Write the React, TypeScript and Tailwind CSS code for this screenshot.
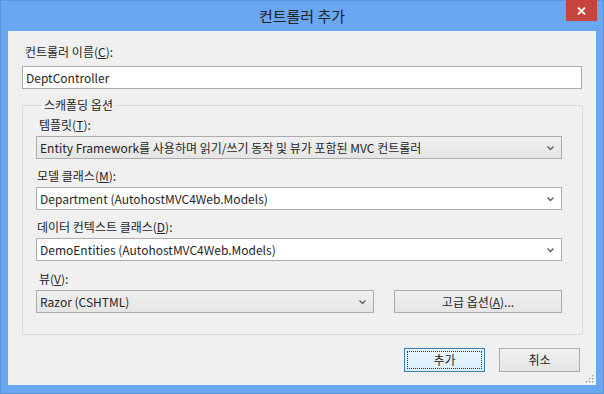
import React from 'react';

const Chevron = () => (
  <svg width="9" height="6" viewBox="0 0 9 6" className="shrink-0">
    <path d="M1.5 1.5 L4.5 4.5 L7.5 1.5" fill="none" stroke="#5f5f5f" strokeWidth="1.4" />
  </svg>
);

interface SelectProps {
  value: string;
  gray?: boolean;
  className?: string;
}

const Select: React.FC<SelectProps> = ({ value, gray, className }) => (
  <div
    className={`flex h-[23px] items-center border pl-[3px] pr-[6px] ${
      gray ? 'border-[#acacac] bg-linear-to-b from-[#f0f0f0] to-[#e5e5e5]' : 'border-[#abadb3] bg-white'
    } ${className ?? ''}`}
  >
    <span className="flex-1 truncate">{value}</span>
    <Chevron />
  </div>
);

const Label: React.FC<{ children: React.ReactNode; className?: string }> = ({ children, className }) => (
  <div className={`h-[16px] leading-[16px] ${className ?? ''}`}>{children}</div>
);

export default function App() {
  return (
    <div className="flex h-[394px] w-[604px] flex-col border border-[#5b96dc] bg-[#69a8f0] font-['Noto_Sans_CJK_KR',sans-serif] text-[12px] text-[#262626]">
      {/* title bar */}
      <div className="relative flex h-[30px] items-center justify-center text-[15px] text-[#222]">
        컨트롤러 추가
        <div className="absolute -top-px right-[6px] flex h-[21px] w-[31px] items-center justify-center bg-[#c7433d]">
          <svg width="9" height="8" viewBox="0 0 9 8">
            <path d="M1 0.5 L8 7.5 M8 0.5 L1 7.5" stroke="white" strokeWidth="1.8" />
          </svg>
        </div>
      </div>

      {/* client area */}
      <div className="relative mb-[8px] ml-[7px] mr-[7px] flex flex-1 flex-col bg-[#f0f0f0] pl-[14px] pr-[14px] pt-[13px]">
        <Label className="pl-[3px]">
          컨트롤러 이름(<u>C</u>):
        </Label>
        <div className="mt-[6px] flex h-[23px] items-center border border-[#ababab] bg-white pl-[3px]">DeptController</div>

        <fieldset className="mt-[8px] mr-[-1px] rounded-[2px] border border-[#dcdcdc] pb-[21px] pl-[13px] pr-[20px] pt-[4px]">
          <legend className="ml-[6px] h-[16px] px-[2px] leading-[16px]">스캐폴딩 옵션</legend>

          <Label className="pl-[3px]">
            템플릿(<u>T</u>):
          </Label>
          <Select className="mt-[3px]" gray value="Entity Framework를 사용하며 읽기/쓰기 동작 및 뷰가 포함된 MVC 컨트롤러" />

          <Label className="mt-[9px] pl-[1px]">
            모델 클래스(<u>M</u>):
          </Label>
          <Select className="mt-[3px]" value="Department (AutohostMVC4Web.Models)" />

          <Label className="mt-[9px] pl-[1px]">
            데이터 컨텍스트 클래스(<u>D</u>):
          </Label>
          <Select className="mt-[3px]" value="DemoEntities (AutohostMVC4Web.Models)" />

          <Label className="mt-[10px] pl-[3px]">
            뷰(<u>V</u>):
          </Label>
          <div className="mt-[3px] flex items-center">
            <Select className="w-[338px]" gray value="Razor (CSHTML)" />
            <div className="ml-auto flex h-[23px] w-[168px] items-center justify-center border border-[#acacac] bg-linear-to-b from-[#f0f0f0] to-[#e5e5e5]">
              고급 옵션(<u>A</u>)...
            </div>
          </div>
        </fieldset>

        <div className="mt-[13px] mr-[2px] flex justify-end gap-[14px]">
          <div className="flex h-[24px] w-[81px] border border-[#3c7fb1] bg-linear-to-b from-[#eaf6fd] to-[#d9f0fc] p-[2px]">
            <div className="flex flex-1 items-center justify-center border border-dotted border-[#333]">추가</div>
          </div>
          <div className="flex h-[24px] w-[81px] items-center justify-center border border-[#acacac] bg-linear-to-b from-[#f0f0f0] to-[#e5e5e5]">
            취소
          </div>
        </div>

        {/* size grip */}
        <svg className="absolute bottom-[1px] right-[1px]" width="10" height="10" viewBox="0 0 10 10">
          {[
            [7, 1],
            [4, 4],
            [7, 4],
            [1, 7],
            [4, 7],
            [7, 7],
          ].map(([x, y], i) => (
            <g key={i}>
              <rect x={x + 1} y={y + 1} width="1.5" height="1.5" fill="#ffffff" />
              <rect x={x} y={y} width="1.5" height="1.5" fill="#a0a0a0" />
            </g>
          ))}
        </svg>
      </div>
    </div>
  );
}
